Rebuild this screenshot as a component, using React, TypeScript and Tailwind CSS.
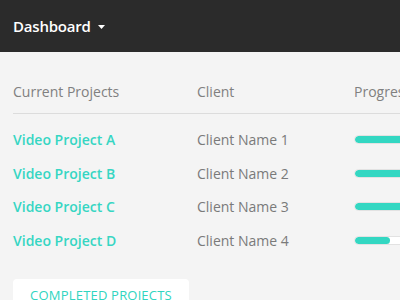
const PROJECTS = [
  { name: 'Video Project A', client: 'Client Name 1', progress: 100 },
  { name: 'Video Project B', client: 'Client Name 2', progress: 100 },
  { name: 'Video Project C', client: 'Client Name 3', progress: 100 },
  { name: 'Video Project D', client: 'Client Name 4', progress: 30 },
];

export default function App() {
  return (
    <div
      className="w-[400px] h-[300px] overflow-hidden bg-[#f4f4f4]"
      style={{ fontFamily: '"Open Sans", "Liberation Sans", sans-serif' }}
    >
      {/* Top bar */}
      <div className="h-[52px] bg-[#2b2b2b] flex items-center pl-[13px] pt-[1px]">
        <span className="text-white text-[15px] font-semibold tracking-[-0.2px]">Dashboard</span>
        <svg className="ml-[7px] mt-[1px]" width="7" height="4" viewBox="0 0 7 4">
          <path d="M0 0h7L3.5 4z" fill="#ffffff" />
        </svg>
      </div>

      {/* Table header */}
      <div className="ml-[13px] pt-[30px] pb-[11px] border-b border-[#dcdcdc] grid grid-cols-[184px_157px_1fr] text-[14px] leading-5 text-[#808080] whitespace-nowrap">
        <span>Current Projects</span>
        <span>Client</span>
        <span>Progress</span>
      </div>

      {/* Rows */}
      <div className="pt-[9px] pl-[13px]">
        {PROJECTS.map((p) => (
          <div
            key={p.name}
            className="h-[33.5px] grid grid-cols-[184px_157px_1fr] items-center text-[14px] whitespace-nowrap"
          >
            <span className="font-semibold text-[#36d6c3]">{p.name}</span>
            <span className="text-[#7a7a7a]">{p.client}</span>
            <div className="h-[9px] w-[120px] rounded-full bg-white border border-[#e2e2e2] overflow-hidden">
              <div className="h-full bg-[#33d7c2] rounded-full" style={{ width: `${p.progress}%` }} />
            </div>
          </div>
        ))}
      </div>

      {/* Button */}
      <div className="pl-[13px] pt-[22px]">
        <button
          type="button"
          className="w-[176px] h-[34px] bg-white rounded-[4px] text-[13px] text-[#30d5c0] uppercase tracking-[0.2px] pb-[1px]"
        >
          Completed Projects
        </button>
      </div>
    </div>
  );
}
